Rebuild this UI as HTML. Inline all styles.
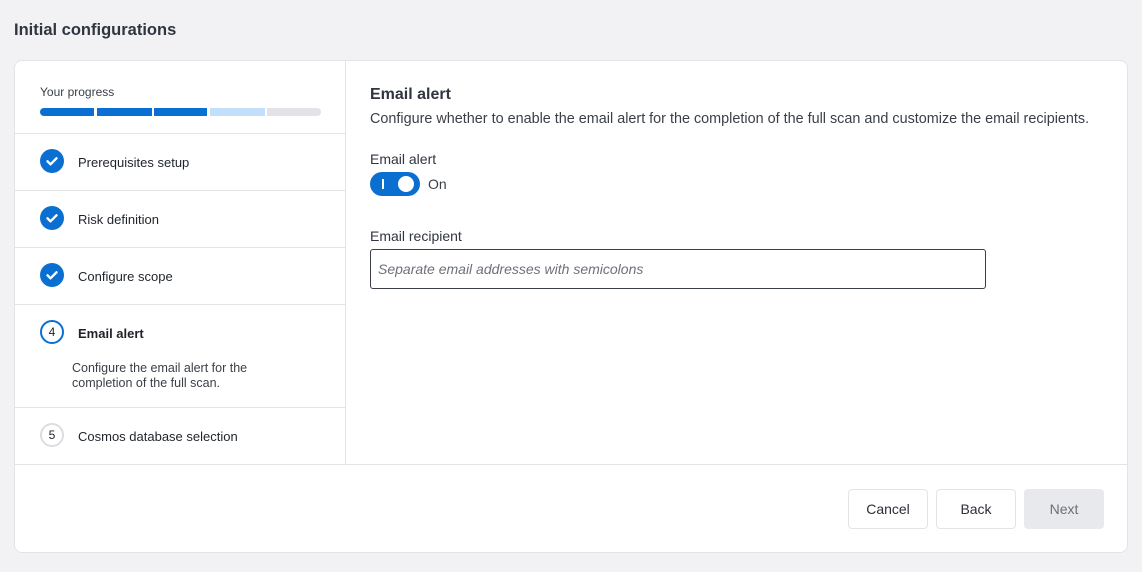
<!DOCTYPE html>
<html><head><style>
*{box-sizing:border-box;margin:0;padding:0}
body{width:1142px;height:572px;background:#f2f2f4;font-family:"Liberation Sans",sans-serif;color:#2b2f36;position:relative;overflow:hidden}
.abs{position:absolute}
h1{position:absolute;left:14px;top:21px;font-size:16.5px;font-weight:bold;color:#303540}
.card{position:absolute;left:14px;top:60px;width:1114px;height:493px;background:#fff;border:1px solid #e3e4e7;border-radius:8px}
.left{position:absolute;left:0;top:0;width:331px;height:404px;border-right:1px solid #e3e4e7;border-bottom:1px solid #e3e4e7}
.sep{position:absolute;left:0;width:331px;height:1px;background:#e3e4e7}
.bar{position:absolute;top:47px;height:8px}
.ic{position:absolute;left:25px;width:24px;height:24px;border-radius:50%;background:#0a6fd1}
.lbl{position:absolute;left:63px;font-size:13px;color:#1f232a}
.num{position:absolute;left:25px;width:24px;height:24px;border-radius:50%;font-size:12px;text-align:center;line-height:20px}
.btn{position:absolute;top:428px;width:80px;height:40px;border:1px solid #e3e4e7;border-radius:4px;font-size:14px;text-align:center;line-height:38px;color:#2b2f36}
</style></head><body>
<h1>Initial configurations</h1>
<div class="card">
 <div class="left">
  <div class="abs" style="left:25px;top:24px;font-size:12px;color:#3a3f47">Your progress</div>
  <div class="bar" style="left:25px;width:54px;background:#0a6fd1;border-radius:4px 0 0 4px"></div>
  <div class="bar" style="left:82px;width:55px;background:#0a6fd1"></div>
  <div class="bar" style="left:139px;width:53px;background:#0a6fd1"></div>
  <div class="bar" style="left:195px;width:55px;background:#c2e0fb"></div>
  <div class="bar" style="left:252px;width:54px;background:#e2e3e7;border-radius:0 4px 4px 0"></div>
  <div class="sep" style="top:72px"></div>
  <div class="ic" style="top:88px"><svg width="24" height="24"><path d="M7.5 12.3l3 3 6-6" stroke="#fff" stroke-width="2.4" fill="none" stroke-linecap="round" stroke-linejoin="round"/></svg></div>
  <div class="lbl" style="top:94px">Prerequisites setup</div>
  <div class="sep" style="top:129px"></div>
  <div class="ic" style="top:145px"><svg width="24" height="24"><path d="M7.5 12.3l3 3 6-6" stroke="#fff" stroke-width="2.4" fill="none" stroke-linecap="round" stroke-linejoin="round"/></svg></div>
  <div class="lbl" style="top:151px">Risk definition</div>
  <div class="sep" style="top:186px"></div>
  <div class="ic" style="top:202px"><svg width="24" height="24"><path d="M7.5 12.3l3 3 6-6" stroke="#fff" stroke-width="2.4" fill="none" stroke-linecap="round" stroke-linejoin="round"/></svg></div>
  <div class="lbl" style="top:208px">Configure scope</div>
  <div class="sep" style="top:243px"></div>
  <div class="num" style="top:259px;border:2px solid #0a6fd1;color:#1f232a">4</div>
  <div class="lbl" style="top:265px;font-weight:bold">Email alert</div>
  <div class="abs" style="left:57px;top:300px;font-size:12.5px;line-height:15px;color:#3a3f47">Configure the email alert for the<br>completion of the full scan.</div>
  <div class="sep" style="top:346px"></div>
  <div class="num" style="top:362px;border:2px solid #dcdde1;color:#1f232a">5</div>
  <div class="lbl" style="top:368px">Cosmos database selection</div>
 </div>
 <div class="abs" style="left:355px;top:25px;font-size:16px;font-weight:bold;color:#303540">Email alert</div>
 <div class="abs" style="left:355px;top:50px;font-size:14.4px;color:#3a3f47">Configure whether to enable the email alert for the completion of the full scan and customize the email recipients.</div>
 <div class="abs" style="left:355px;top:90px;font-size:14px;color:#303540">Email alert</div>
 <div class="abs" style="left:355px;top:111px;width:50px;height:24px;border-radius:12px;background:#0a6fd1">
  <div class="abs" style="left:12px;top:7px;width:2px;height:10px;background:#fff"></div>
  <div class="abs" style="left:28px;top:4px;width:16px;height:16px;border-radius:50%;background:#fff"></div>
 </div>
 <div class="abs" style="left:413px;top:115px;font-size:14px;color:#3a3f47">On</div>
 <div class="abs" style="left:355px;top:167px;font-size:14px;color:#303540">Email recipient</div>
 <div class="abs" style="left:355px;top:188px;width:616px;height:40px;border:1px solid #3a3f47;border-radius:3px;font-size:14px;font-style:italic;color:#6c7079;padding:11px 7px">Separate email addresses with semicolons</div>
 <div class="abs" style="left:0;top:403px;width:1112px;height:1px;background:#e3e4e7"></div>
 <div class="btn" style="left:833px">Cancel</div>
 <div class="btn" style="left:921px">Back</div>
 <div class="btn" style="left:1009px;background:#e8e9ec;border-color:#e8e9ec;color:#6c7079">Next</div>
</div>
</body></html>
